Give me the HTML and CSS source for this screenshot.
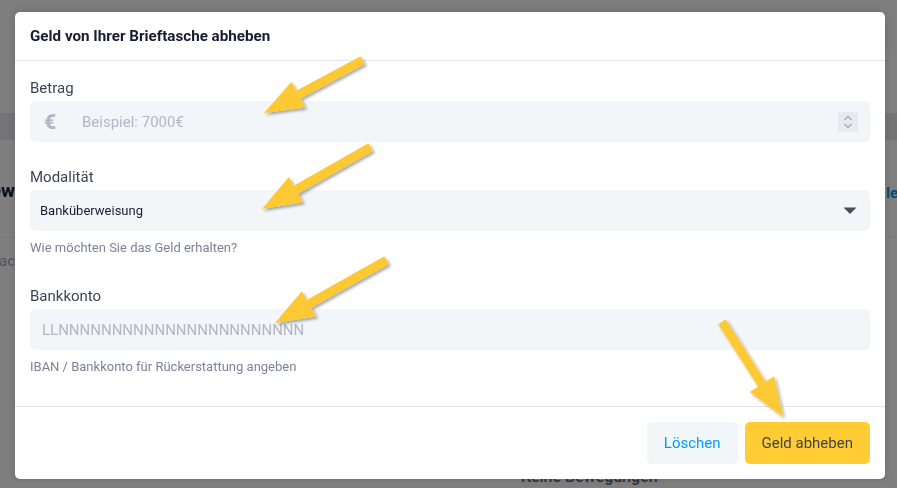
FILE: index.html
```html
<!DOCTYPE html>
<html lang="de">
<head>
<meta charset="utf-8">
<title>Geld abheben</title>
<link rel="stylesheet" href="styles.css">
</head>
<body>
<div class="page">
  <div class="page-top"></div>
  <div class="page-head"></div>
  <div class="page-tabs"></div>
  <div class="page-toolbar">
    <div class="bg-left"><span>Übersicht Neue Bewegungen Review</span></div>
    <div class="bg-right"><span>les anzeigen</span></div>
  </div>
  <div class="page-divider"></div>
  <div class="page-search"><span>Suche nac</span></div>
  <div class="page-empty">Keine Bewegungen</div>
</div>

<div class="backdrop"></div>

<div class="modal">
  <div class="modal-header">
    <h2 class="modal-title">Geld von Ihrer Brieftasche abheben</h2>
  </div>
  <div class="modal-body">
    <div class="field">
      <label class="field-label">Betrag</label>
      <div class="input input-amount">
        <span class="euro">€</span>
        <input class="control" type="text" placeholder="Beispiel: 7000€">
        <span class="spinner">
          <svg width="20" height="20" viewBox="0 0 20 20"><polyline points="6.5,8 10,4.5 13.5,8" fill="none" stroke="#a8a8b8" stroke-width="1.3"/><polyline points="6.5,12 10,15.5 13.5,12" fill="none" stroke="#a8a8b8" stroke-width="1.3"/></svg>
        </span>
      </div>
    </div>
    <div class="field">
      <label class="field-label">Modalität</label>
      <div class="input select">
        <span class="select-value">Banküberweisung</span>
        <svg class="caret" width="14" height="8" viewBox="0 0 14 8"><polygon points="0.5,0.5 13.5,0.5 7,7" fill="#4a4e5c"/></svg>
      </div>
      <div class="field-help">Wie möchten Sie das Geld erhalten?</div>
    </div>
    <div class="field">
      <label class="field-label">Bankkonto</label>
      <div class="input">
        <input class="control" type="text" placeholder="LLNNNNNNNNNNNNNNNNNNNNNNN">
      </div>
      <div class="field-help">IBAN / Bankkonto für Rückerstattung angeben</div>
    </div>
  </div>
  <div class="modal-footer">
    <button class="btn btn-light">Löschen</button>
    <button class="btn btn-warning">Geld abheben</button>
  </div>
</div>

<svg class="annotations" width="897" height="488" viewBox="0 0 897 488">
  <defs>
    <filter id="arrowShadow" x="-20%" y="-20%" width="140%" height="140%">
      <feDropShadow dx="2" dy="2" stdDeviation="1.5" flood-color="#000" flood-opacity="0.35"/>
    </filter>
  </defs>
  <g fill="#fcc934" filter="url(#arrowShadow)">
    <polygon transform="translate(264 113) rotate(151.84)" points="0,0 -39,-14.5 -39,-4.5 -112,-4.5 -112,4.5 -39,4.5 -39,14.5"/>
    <polygon transform="translate(262 209) rotate(150.37)" points="0,0 -39,-14.5 -39,-4.5 -125,-4.5 -125,4.5 -39,4.5 -39,14.5"/>
    <polygon transform="translate(275 323) rotate(150.64)" points="0,0 -39,-14.5 -39,-4.5 -128,-4.5 -128,4.5 -39,4.5 -39,14.5"/>
    <polygon transform="translate(783 417) rotate(57.3)" points="0,0 -39,-14.5 -39,-4.5 -113,-4.5 -113,4.5 -39,4.5 -39,14.5"/>
  </g>
</svg>
</body>
</html>
```
FILE: styles.css
```css
html, body {
  margin: 0;
  padding: 0;
}

body {
  width: 897px;
  height: 488px;
  overflow: hidden;
  position: relative;
  background: #ffffff;
  font-family: Roboto, "Noto Sans", "Liberation Sans", sans-serif;
}

/* background page (dimmed by the backdrop) */
.page {
  display: flex;
  flex-direction: column;
  height: 488px;
}

.page-top {
  height: 55px;
  background: #fdfdfd;
}

.page-head {
  height: 58px;
}

.page-tabs {
  height: 27px;
  background: #e8e9ef;
}

.page-toolbar {
  display: flex;
  justify-content: space-between;
  align-items: flex-end;
  margin-top: 40px;
  height: 22px;
  font-weight: 700;
}

.bg-left {
  width: 15px;
  overflow: hidden;
  display: flex;
  justify-content: flex-end;
  white-space: nowrap;
  font-size: 19px;
  color: #181c32;
}

.bg-right {
  width: 11px;
  overflow: hidden;
  white-space: nowrap;
  font-size: 15px;
  color: #009ef7;
}

.page-divider {
  margin-top: 35px;
  height: 1px;
  background: #f0f0f5;
}

.page-search {
  margin-top: 14px;
  width: 15px;
  overflow: hidden;
  display: flex;
  justify-content: flex-end;
  white-space: nowrap;
  font-size: 15px;
  color: #a1a5b7;
}

.page-empty {
  margin-top: auto;
  margin-bottom: 2px;
  margin-left: 521px;
  font-size: 16px;
  font-weight: 500;
  color: #5e6278;
}

.backdrop {
  position: fixed;
  inset: 0;
  background: rgba(0, 0, 0, 0.5);
}

/* modal */
.modal {
  position: absolute;
  left: 15px;
  top: 12px;
  width: 870px;
  background: #ffffff;
  border-radius: 5px;
  box-shadow: 0 0 8px rgba(0, 0, 0, 0.15);
}

.modal-header {
  padding: 15px;
  border-bottom: 1px solid #e4e6ef;
}

.modal-title {
  margin: 0;
  font-size: 15.2px;
  line-height: 18px;
  font-weight: 700;
  color: #181c32;
}

.modal-body {
  display: flex;
  flex-direction: column;
  gap: 26px;
  padding: 18px 15px 26px;
}

.field-label {
  display: block;
  margin-bottom: 4px;
  font-size: 15px;
  line-height: 18px;
  color: #3f4254;
}

.input {
  display: flex;
  align-items: center;
  height: 41px;
  padding: 0 12px;
  background: #f3f6f9;
  border-radius: 5px;
}

.input-amount {
  padding-left: 14px;
}

.euro {
  width: 13px;
  margin-right: 25px;
  font-size: 21px;
  font-weight: 900;
  line-height: 20px;
  color: #b5b5c3;
}

.control {
  flex: 1;
  min-width: 0;
  margin: 0;
  padding: 0;
  border: 0;
  outline: none;
  background: transparent;
  font-family: Roboto, "Noto Sans", "Liberation Sans", sans-serif;
  font-size: 15px;
  color: #3f4254;
}

.control::placeholder {
  color: #b5b5c3;
  opacity: 1;
}

.spinner {
  display: flex;
  width: 20px;
  height: 20px;
  background: #e9e9ef;
}

.select {
  justify-content: space-between;
  padding: 0 13px 0 10px;
}

.select-value {
  font-size: 13px;
  color: #181c32;
}

.caret {
  display: block;
}

.field-help {
  margin-top: 9px;
  padding-bottom: 5px;
  font-size: 13px;
  line-height: 16px;
  color: #7e8299;
}

.modal-footer {
  display: flex;
  justify-content: flex-end;
  gap: 7px;
  padding: 15px;
  border-top: 1px solid #e4e6ef;
}

.btn {
  height: 42px;
  padding: 0 17px;
  border: 0;
  border-radius: 5px;
  font-family: Roboto, "Noto Sans", "Liberation Sans", sans-serif;
  font-size: 15px;
}

.btn-light {
  background: #f3f6f9;
  color: #009ef7;
}

.btn-warning {
  background: #ffcd33;
  color: #3f4254;
}

.annotations {
  position: absolute;
  left: 0;
  top: 0;
  pointer-events: none;
}
```
